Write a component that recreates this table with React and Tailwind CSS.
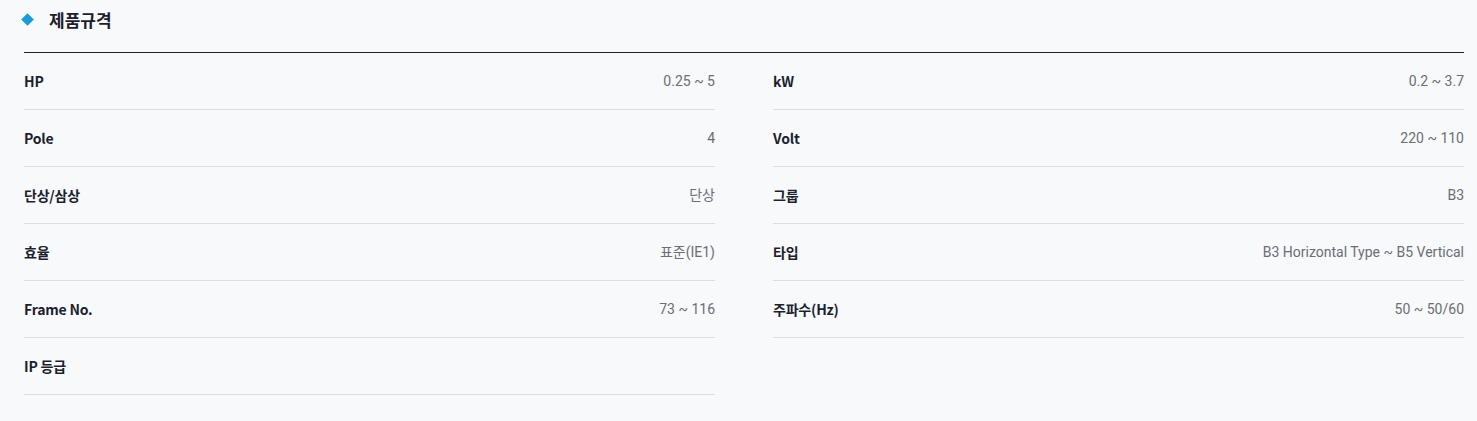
const LEFT = [
  { label: "HP", value: "0.25 ~ 5" },
  { label: "Pole", value: "4" },
  { label: "단상/삼상", value: "단상" },
  { label: "효율", value: "표준(IE1)" },
  { label: "Frame No.", value: "73 ~ 116" },
  { label: "IP 등급", value: "" },
];

const RIGHT = [
  { label: "kW", value: "0.2 ~ 3.7" },
  { label: "Volt", value: "220 ~ 110" },
  { label: "그룹", value: "B3" },
  { label: "타입", value: "B3 Horizontal Type ~ B5 Vertical" },
  { label: "주파수(Hz)", value: "50 ~ 50/60" },
];

function SpecRow({ label, value }) {
  return (
    <div className="flex h-[57px] items-center justify-between border-b border-[#dcdde0]">
      <span className="font-['Noto_Sans_CJK_KR',sans-serif] text-[14px] font-bold tracking-[-0.2px] text-[#1b1f2e]">
        {label}
      </span>
      <span className="font-['Roboto','Noto_Sans_CJK_KR',sans-serif] text-[14px] text-[#6b6e75]">{value}</span>
    </div>
  );
}

export default function App() {
  return (
    <div className="min-h-[421px] bg-[#f8f9fb] font-['Noto_Sans_CJK_KR',sans-serif]">
      <div className="ml-6 w-[1440px]">
        <div className="flex h-[53px] items-start border-b border-[#222] pt-[9px]">
          <span className="mt-[6px] h-[9px] w-[9px] -translate-x-[1px] rotate-45 bg-[#1b9ad8]" />
          <h2 className="ml-[16px] text-[17px] font-bold leading-[22px] text-[#1c1e2c]">제품규격</h2>
        </div>
        <div className="grid grid-cols-2 gap-x-[58px]">
          <div className="flex flex-col">
            {LEFT.map((r) => (
              <SpecRow key={r.label} {...r} />
            ))}
          </div>
          <div className="flex flex-col">
            {RIGHT.map((r) => (
              <SpecRow key={r.label} {...r} />
            ))}
          </div>
        </div>
      </div>
    </div>
  );
}
